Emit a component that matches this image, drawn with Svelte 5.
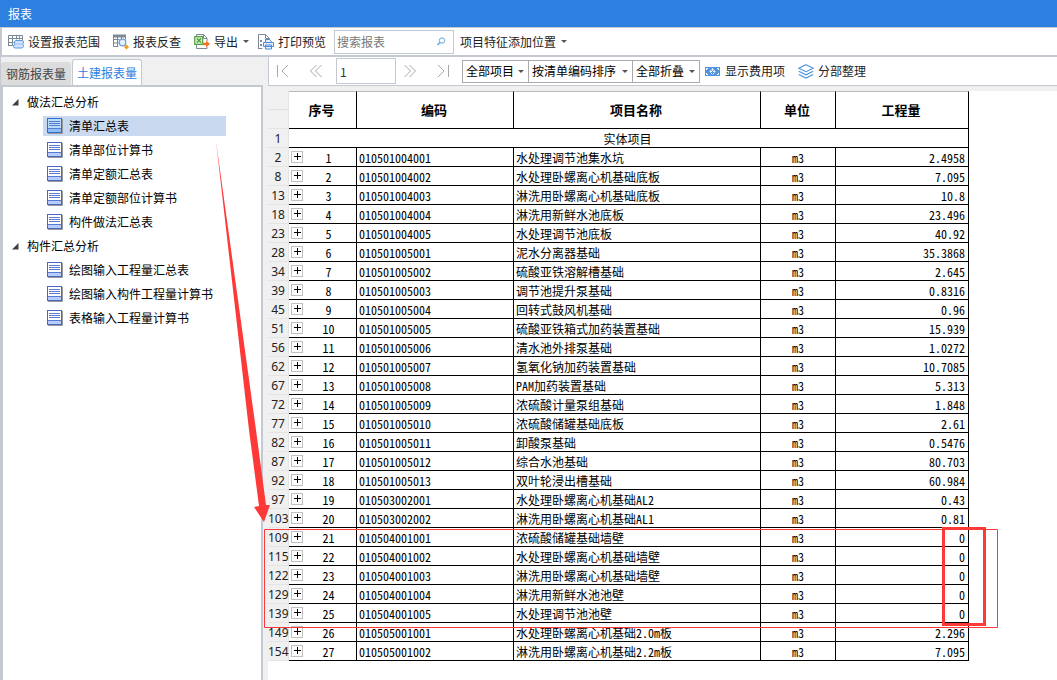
<script>
  let search = '';
  let page = 1;
  let selected = '清单汇总表';

  const filters = [
    { label: '项目范围', size: 'short', options: ['全部项目'] },
    { label: '排序方式', size: 'long', options: ['按清单编码排序'] },
    { label: '折叠方式', size: 'short', options: ['全部折叠'] },
  ];

  const groups = [
    {
      name: '做法汇总分析',
      items: ['清单汇总表', '清单部位计算书', '清单定额汇总表', '清单定额部位计算书', '构件做法汇总表'],
    },
    {
      name: '构件汇总分析',
      items: ['绘图输入工程量汇总表', '绘图输入构件工程量计算书', '表格输入工程量计算书'],
    },
  ];

  // line number, code, name, quantity
  const rows = [
    [2, '010501004001', '水处理调节池集水坑', '2.4958'],
    [8, '010501004002', '水处理卧螺离心机基础底板', '7.095'],
    [13, '010501004003', '淋洗用卧螺离心机基础底板', '10.8'],
    [18, '010501004004', '淋洗用新鲜水池底板', '23.496'],
    [23, '010501004005', '水处理调节池底板', '40.92'],
    [28, '010501005001', '泥水分离器基础', '35.3868'],
    [34, '010501005002', '硫酸亚铁溶解槽基础', '2.645'],
    [39, '010501005003', '调节池提升泵基础', '0.8316'],
    [45, '010501005004', '回转式鼓风机基础', '0.96'],
    [51, '010501005005', '硫酸亚铁箱式加药装置基础', '15.939'],
    [56, '010501005006', '清水池外排泵基础', '1.0272'],
    [62, '010501005007', '氢氧化钠加药装置基础', '10.7085'],
    [67, '010501005008', 'PAM加药装置基础', '5.313'],
    [72, '010501005009', '浓硫酸计量泵组基础', '1.848'],
    [77, '010501005010', '浓硫酸储罐基础底板', '2.61'],
    [82, '010501005011', '卸酸泵基础', '0.5476'],
    [87, '010501005012', '综合水池基础', '80.703'],
    [92, '010501005013', '双叶轮浸出槽基础', '60.984'],
    [97, '010503002001', '水处理卧螺离心机基础AL2', '0.43'],
    [103, '010503002002', '淋洗用卧螺离心机基础AL1', '0.81'],
    [109, '010504001001', '浓硫酸储罐基础墙壁', '0'],
    [115, '010504001002', '水处理卧螺离心机基础墙壁', '0'],
    [122, '010504001003', '淋洗用卧螺离心机基础墙壁', '0'],
    [129, '010504001004', '淋洗用新鲜水池池壁', '0'],
    [139, '010504001005', '水处理调节池池壁', '0'],
    [149, '010505001001', '水处理卧螺离心机基础2.0m板', '2.296'],
    [154, '010505001002', '淋洗用卧螺离心机基础2.2m板', '7.095'],
  ];
</script>

<div class="window">
  <header class="title">报表</header>

  <div class="toolbar">
    <button class="tool">
      <svg width="16" height="16" viewBox="0 0 16 16" fill="none">
        <path d="M0.5 12V1.5h14V6M0.5 4.5h14M0.5 8.5h5M0.5 11.5h5M4.5 1.5v10M8.5 1.5v4M11.5 1.5v4" stroke="#7d8896" />
        <path d="M8 6.5h6q1.500 0 1.500 1.500t-1 2q1.500 1 1 2.500t-2 1.500H7.500q-2 0-2-1.500t1.500-2q-1-1-0.500-2.500t1.500-1.500z" fill="#cfe3fa" stroke="#5d9ade" />
        <path d="M7 10h7" stroke="#9cc4f0" />
      </svg>
      <span>设置报表范围</span>
    </button>
    <button class="tool">
      <svg width="16" height="16" viewBox="0 0 16 16" fill="none">
        <path d="M0.500 1.500v11h5M12.500 1.500v4M0.500 5.500h6M0.500 9h5M4.500 3v9M8.500 3v2" stroke="#7d8896" />
        <path d="M0 0.500h13v3H0z" fill="#7d8896" />
        <circle cx="9.500" cy="8.500" r="3.300" fill="#e4f0fc" stroke="#6d9fdc" stroke-width="1.300" />
        <path d="M13.500 10.500l2.500 2.500-2.500 2.500L11 13z" fill="#f39a1e" />
      </svg>
      <span>报表反查</span>
    </button>
    <button class="tool">
      <svg width="16" height="16" viewBox="0 0 16 16" fill="none">
        <path d="M2.500 2V0.500h7l3.500 3.500v3M9.500 0.500v4h3.500M13 13v1.500H2.500V11" stroke="#7d8896" />
        <path d="M0.700 2.700h8v7.600h-8z" fill="#d4ebc6" stroke="#5aa343" stroke-width="1.200" />
        <path d="M3 4.500l4 4M7 4.500l-4 4" stroke="#4f9c38" stroke-width="1.200" />
        <path d="M9 8.800h3V6.500l4 3.500-4 3.500v-2.300H9z" fill="#f2702a" />
      </svg>
      <span>导出</span>
      <i class="caret"></i>
    </button>
    <button class="tool">
      <svg width="16" height="16" viewBox="0 0 16 16" fill="none">
        <path d="M0.500 15V0.500h7l4 4V6M7.500 0.500v4h4M0.500 14.500h4" stroke="#7d8896" />
        <path d="M2 6h2v2H2zM2 10h2v2H2z" fill="#7d8896" />
        <path d="M7.500 8V5.500h4l2 2V8M5.500 8.500h10v4h-10zM7.500 11h6v4h-6z" fill="#e4f0fc" stroke="#4a8bdb" />
      </svg>
      <span>打印预览</span>
    </button>
    <div class="search">
      <input aria-label="搜索报表" placeholder="搜索报表" bind:value={search} />
      <svg width="9" height="9" viewBox="0 0 9 9" fill="none" stroke="#58a8e0">
        <circle cx="5" cy="3.500" r="2.700" />
        <path d="M3 5.500L0.500 8" stroke-width="1.500" />
      </svg>
    </div>
    <button class="tool">
      <span>项目特征添加位置</span>
      <i class="caret"></i>
    </button>
  </div>

  <div class="body">
    <aside>
      <div class="tabs">
        <button class="tab">钢筋报表量</button>
        <button class="tab active">土建报表量</button>
      </div>
      <nav class="tree">
        {#each groups as group}
          <div class="group">
            <svg width="7" height="7" viewBox="0 0 7 7"><path d="M6.500 0v6.500H0z" fill="#404040" /></svg>
            {group.name}
          </div>
          {#each group.items as item}
            <button class="leaf" class:selected={selected === item} on:click={() => (selected = item)}>
              <svg width="16" height="16" viewBox="0 0 16 16">
                <path d="M1 15.500h14.500V1" fill="none" stroke="#9a9a9a" />
                <rect class="paper" x="0.500" y="0.500" width="14" height="14" />
                <path class="foot" d="M1 11h13v3H1z" />
                <path class="ink" d="M2 3.500h11M2 5.500h11M2 7.500h11M1 10.500h13" />
              </svg>
              {item}
            </button>
          {/each}
        {/each}
      </nav>
    </aside>

    <main>
      <div class="pager">
        <button class="step" aria-label="首页">
          <svg width="14" height="14" viewBox="0 0 14 14"><path d="M1.500 1v12M12 1L6 7l6 6" /></svg>
        </button>
        <button class="step" aria-label="上一页">
          <svg width="14" height="14" viewBox="0 0 14 14"><path d="M7.500 1l-6 6 6 6M12.500 1l-6 6 6 6" /></svg>
        </button>
        <input class="page" aria-label="页码" bind:value={page} />
        <button class="step" aria-label="下一页">
          <svg width="14" height="14" viewBox="0 0 14 14"><path d="M1.500 1l6 6-6 6M6.500 1l6 6-6 6" /></svg>
        </button>
        <button class="step" aria-label="末页">
          <svg width="14" height="14" viewBox="0 0 14 14"><path d="M12.500 1v12M2 1l6 6-6 6" /></svg>
        </button>
        <div class="filters">
          {#each filters as filter}
            <label class="filter {filter.size}">
              <select aria-label={filter.label}>
                {#each filter.options as option}
                  <option>{option}</option>
                {/each}
              </select>
              <i class="caret"></i>
            </label>
          {/each}
        </div>
        <button class="action">
          <svg width="15" height="9" viewBox="0 0 15 9">
            <path d="M0 0h15v9H0z" fill="#4f94dc" />
            <path d="M1.500 3V1.500h1.500M12 1.500h1.500V3M1.500 6v1.500h1.500M12 7.500h1.500V6" fill="none" stroke="#fff" />
            <path d="M7.500 1l3 3.500-3 3.500-3-3.500z" fill="#fff" />
            <path d="M5.500 2l2 2.500 2-2.500M7.500 4v3.500M6 5.500h3" fill="none" stroke="#4f94dc" />
          </svg>
          <span>显示费用项</span>
        </button>
        <button class="action">
          <svg width="16" height="15" viewBox="0 0 16 15" fill="none" stroke="#4f94dc" stroke-width="1.200">
            <path d="M8 0.700l7.200 3.500L8 7.700 0.800 4.200z" />
            <path d="M0.800 7.300L8 10.800l7.200-3.500M0.800 10.500L8 14l7.200-3.500" />
          </svg>
          <span>分部整理</span>
        </button>
      </div>

      <div class="sheet">
        <table>
          <colgroup>
            <col class="c-line" /><col class="c-no" /><col class="c-code" />
            <col class="c-name" /><col class="c-unit" /><col class="c-qty" />
          </colgroup>
          <thead>
            <tr>
              <td class="line split"></td>
              <th>序号</th>
              <th>编码</th>
              <th>项目名称</th>
              <th>单位</th>
              <th>工程量</th>
            </tr>
          </thead>
          <tbody>
            <tr>
              <td class="line">1</td>
              <td class="section" colspan="5">实体项目</td>
            </tr>
            {#each rows as [line, code, name, qty], i}
              <tr>
                <td class="line">{line}</td>
                <td>
                  <div class="no">
                    <button class="expand" aria-label="展开">
                      <svg width="7" height="7" viewBox="0 0 7 7"><path d="M0 3.500h7M3.500 0v7" stroke="#000" /></svg>
                    </button>
                    <span>{i + 1}</span>
                  </div>
                </td>
                <td>{code}</td>
                <td>{name}</td>
                <td class="unit">m3</td>
                <td class="qty">{qty}</td>
              </tr>
            {/each}
          </tbody>
        </table>
      </div>
    </main>
  </div>

  <!-- red mark-up over the zero quantities -->
  <svg class="marks" width="1057" height="680" viewBox="0 0 1057 680" fill="none">
    <path d="M216 141L256 430L266 505L270 505L264 522L254 507L259 506L249 430Z" fill="#fd3a37" />
    <path d="M264.500 529.500h733v98h-733z" stroke="#fd3a37" />
    <path d="M943.500 528.500h41v96h-41z" stroke="#fd3a37" stroke-width="3" />
  </svg>
</div>

<style>
  :global(body) {
    background: #fff;
  }

  .window {
    position: relative;
    display: flex;
    flex-direction: column;
    min-height: 100vh;
    box-sizing: border-box;
    overflow: hidden;
    background: #f0f0f0;
    color: #000;
    font: 12px/18px 'Noto Sans CJK SC', sans-serif;
  }

  button,
  input,
  select {
    margin: 0;
    padding: 0;
    border: 0;
    background: none;
    color: inherit;
    font: inherit;
    border-radius: 0;
    box-sizing: border-box;
  }

  svg {
    flex: none;
  }

  .title {
    height: 27px;
    padding: 0 8px;
    background: #2d7fe0;
    color: #fff;
    line-height: 27px;
  }

  .toolbar {
    display: flex;
    align-items: center;
    height: 30px;
    box-sizing: border-box;
    padding-left: 6px;
    border: solid #c4c8d0;
    border-width: 1px 0 2px 2px;
    background: #fff;
  }

  .tool {
    display: flex;
    align-items: center;
    gap: 4px;
    height: 24px;
    margin-right: 13px;
    white-space: nowrap;
    color: #222;
  }

  .tool:has(.caret) {
    margin-right: 10px;
  }

  .caret {
    width: 0;
    border: 3px solid transparent;
    border-top-color: #555;
    border-bottom: 0;
  }

  .tool .caret {
    margin-left: 1px;
    margin-right: -1px;
  }

  .search {
    display: flex;
    align-items: center;
    width: 120px;
    height: 24px;
    margin: 0 6px 0 -5px;
    padding: 0 7px 0 2px;
    box-sizing: border-box;
    border: 1px solid #c4c8d0;
  }

  .search input {
    flex: 1;
    min-width: 0;
    outline: none;
  }

  .search input::placeholder {
    color: #777;
    opacity: 1;
  }

  .body {
    display: flex;
    flex: 1;
    gap: 5px;
  }

  aside {
    display: flex;
    flex-direction: column;
    width: 263px;
    flex: none;
  }

  .tabs {
    display: flex;
    align-items: flex-end;
    height: 28px;
    border-left: 1px solid #c4c8d0;
  }

  .tab {
    width: 70px;
    height: 23px;
    border-radius: 3px 3px 0 0;
    background: #dcdcdc;
    color: #444;
  }

  .tab.active {
    height: 26px;
    border: 1px solid #c4c8d0;
    border-bottom: 0;
    background: #fff;
    color: #2d7fe0;
    margin-left: 1px;
  }

  .tree {
    display: flex;
    flex-direction: column;
    flex: 1;
    padding: 3px 0 0 9px;
    border: solid #c4c8d0;
    border-width: 2px 2px 0 3px;
    background: #fff;
  }

  .group {
    display: flex;
    align-items: center;
    gap: 8px;
    height: 24px;
  }

  .leaf {
    display: flex;
    align-items: center;
    gap: 6px;
    width: 183px;
    height: 20px;
    margin: 2px 0 2px 31px;
    padding-left: 4px;
    white-space: nowrap;
  }

  .leaf.selected {
    background: #c9d9f0;
  }

  .paper {
    fill: #fff;
    stroke: #4667c4;
  }

  .foot {
    fill: #b9cbf8;
  }

  .ink {
    fill: none;
    stroke: #5b7bd0;
  }

  .selected .paper {
    fill: #b9dcfb;
    stroke: #3170c8;
  }

  .selected .foot {
    fill: #8dbdf6;
  }

  main {
    display: flex;
    flex-direction: column;
    flex: 1;
    min-width: 0;
  }

  .pager {
    display: flex;
    align-items: center;
    height: 29px;
    box-sizing: border-box;
    border: 1px solid #c4c8d0;
    border-width: 0 0 1px 1px;
    background: #fff;
  }

  .step {
    display: flex;
    align-items: center;
    justify-content: center;
    width: 33px;
    height: 24px;
    padding-right: 6px;
    flex: none;
  }

  .step svg {
    fill: none;
    stroke: #a8a8a8;
  }

  .page {
    width: 60px;
    height: 26px;
    margin-left: 1px;
    padding: 0 3px;
    border: 1px solid #c4c8d0;
    color: #333;
    outline: none;
  }

  .filters {
    display: flex;
  }

  .filter {
    display: flex;
    align-items: center;
    height: 23px;
    box-sizing: border-box;
    padding-right: 4px;
    border: 1px solid #aaa;
  }

  .filter + .filter {
    border-left: 0;
  }

  .filter.short {
    width: 67px;
  }

  .filter.long {
    width: 104px;
  }

  .filter select {
    flex: 1;
    min-width: 0;
    padding-left: 3px;
    appearance: none;
    outline: none;
  }

  .action {
    display: flex;
    align-items: center;
    gap: 5px;
    margin-left: 5px;
    white-space: nowrap;
    color: #222;
  }

  .action + .action {
    gap: 4px;
    margin-left: 13px;
  }

  .sheet {
    flex: 1;
    margin-top: 5px;
    background: #fff;
  }

  table {
    border-collapse: separate;
    border-spacing: 0;
    table-layout: fixed;
    width: 701px;
    font: 12px/16px 'Noto Sans Mono CJK SC', 'Noto Sans CJK SC', monospace;
  }

  .c-line {
    width: 21px;
  }

  .c-no {
    width: 68px;
  }

  .c-code {
    width: 157px;
  }

  .c-name {
    width: 247px;
  }

  .c-unit {
    width: 75px;
  }

  .c-qty {
    width: 133px;
  }

  th,
  td {
    height: 19px;
    box-sizing: border-box;
    padding: 2px 2px 0;
    border: solid #000;
    border-width: 0 1px 1px 0;
    white-space: nowrap;
  }

  th {
    height: 38px;
    padding: 0 2px 0 0;
    border-top: 1px solid #bbb;
    font-size: 13px;
  }

  .line {
    padding: 2px 0 0;
    border: solid #e4e4e4;
    border-width: 0 1px 1px 0;
    background: #f0f0f0;
    font-family: 'Noto Sans', sans-serif;
    color: #222;
    text-align: center;
  }

  .split {
    background: linear-gradient(#f0f0f0 18px, #e0e0e0 18px, #e0e0e0 19px, #f0f0f0 19px);
  }

  .section,
  .unit {
    text-align: center;
  }

  .section {
    padding-right: 4px;
  }

  .qty {
    padding-right: 3px;
    text-align: right;
  }

  .no {
    display: flex;
    align-items: center;
    height: 16px;
  }

  .no span {
    flex: 1;
    text-align: center;
  }

  .expand {
    display: flex;
    align-items: center;
    justify-content: center;
    width: 12px;
    height: 12px;
    margin-bottom: 3px;
    border: 1px solid #c0c0c0;
  }

  .marks {
    position: absolute;
    top: 0;
    left: 0;
    pointer-events: none;
  }
</style>
